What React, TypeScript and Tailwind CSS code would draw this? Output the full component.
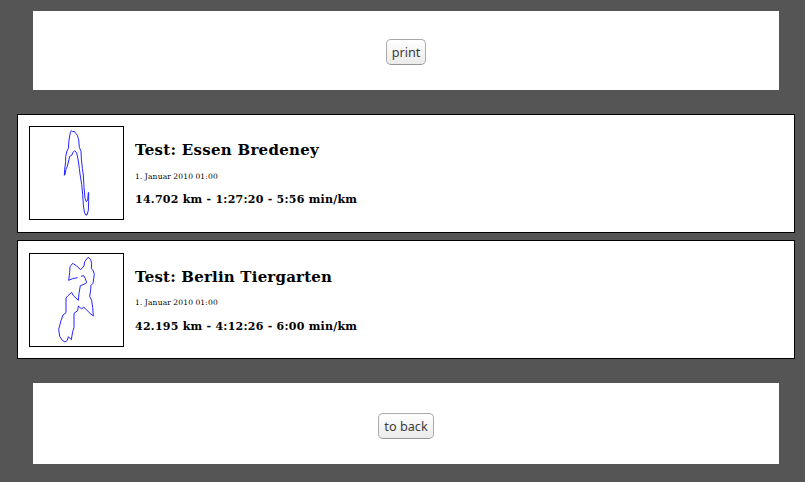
type Run = {
  title: string;
  titleStyle: string;
  dateStyle: string;
  stats: string;
  statsStyle: string;
  viewBox: string;
  track: string;
  pad: string;
};

const runs: Run[] = [
  {
    title: "Test: Essen Bredeney",
    titleStyle: "tracking-[0.28px]",
    dateStyle: "mt-[12px]",
    stats: "14.702 km - 1:27:20 - 5:56 min/km",
    statsStyle: "mt-[10px]",
    viewBox: "60 66 279 276",
    track:
      "M163 211L164 193L167 170L167 155L171 138L175 130L177 105L181 82L184 77L188 80L193 79L197 85L202 91L206 104L208 127L213 139L214 160L217 190L220 210L222 247L225 280L229 290L233 285L235 262L236 263L236 290L235 316L231 330L227 330L223 321L220 300L218 268L215 238L210 207L208 190L204 162L200 144L194 137L189 142L185 151L179 154L177 163L172 184L168 192L165 209Z",
    pad: "pt-[11px]",
  },
  {
    title: "Test: Berlin Tiergarten",
    titleStyle: "tracking-[0.2px]",
    dateStyle: "mt-[11px]",
    stats: "42.195 km - 4:12:26 - 6:00 min/km",
    statsStyle: "mt-[11px]",
    viewBox: "60 57 279 276",
    track:
      "M203 128L188 131L176 136L179 113L180 95L188 85L200 93L212 104L222 93L224 80L234 67L242 73L245 86L244 100L250 108L253 118L249 145L243 151L242 164L239 184L245 196L248 217L250 243L240 235L221 216L215 222L205 213L203 227L192 235L192 278L188 290L184 314L175 305L172 316L165 321L157 316L149 304L146 283L153 257L159 240L168 233L168 189L174 182L185 172L190 182L205 196L207 175L211 152L222 148L230 143L226 131L221 122L213 124",
    pad: "pt-[12px]",
  },
];

function Button({ label, size }: { label: string; size: string }) {
  return (
    <button
      className={`flex h-[26px] ${size} shrink-0 items-start justify-center whitespace-nowrap rounded-[5px] border border-[#aaa] border-b-[#969696] bg-linear-to-b from-white to-[#ebebeb] p-0 font-['Noto_Sans',sans-serif] text-[12.7px] leading-[24px] text-[#3c3c3c]`}
    >
      {label}
    </button>
  );
}

function RunCard({ run }: { run: Run }) {
  return (
    <article className={`flex h-[119px] w-[778px] items-start gap-[11px] border border-black bg-white pl-[11px] ${run.pad}`}>
      <svg
        className="h-[94px] w-[95px] shrink-0 border border-black"
        viewBox={run.viewBox}
        preserveAspectRatio="none"
        fill="none"
        stroke="#1414ff"
        strokeWidth="2.8"
      >
        <path d={run.track} />
      </svg>
      <div className="whitespace-nowrap pt-[14px]">
        <h2 className={`text-[15px] font-bold leading-[20px] ${run.titleStyle}`}>{run.title}</h2>
        <p className={`text-[7.5px] leading-[10px] tracking-[0.2px] [word-spacing:-0.4px] ${run.dateStyle}`}>1. Januar 2010 01:00</p>
        <p className={`text-[11px] font-bold leading-[16px] tracking-[0.25px] ${run.statsStyle}`}>{run.stats}</p>
      </div>
    </article>
  );
}

export default function App() {
  return (
    <main className="h-[482px] w-[805px] overflow-hidden bg-[#555] pl-[17px] pt-[11px] font-['DejaVu_Serif',serif] text-black">
      <div className="ml-4 flex h-[79px] w-[746px] items-start justify-center bg-white pt-[28px]">
        <Button label="print" size="w-[40px]" />
      </div>
      <div className="mt-6 flex flex-col gap-[7px]">
        {runs.map((run) => (
          <RunCard key={run.title} run={run} />
        ))}
      </div>
      <div className="ml-4 mt-6 flex h-[81px] w-[746px] items-start justify-center bg-white pt-[30px]">
        <Button label="to back" size="w-[56px]" />
      </div>
    </main>
  );
}
